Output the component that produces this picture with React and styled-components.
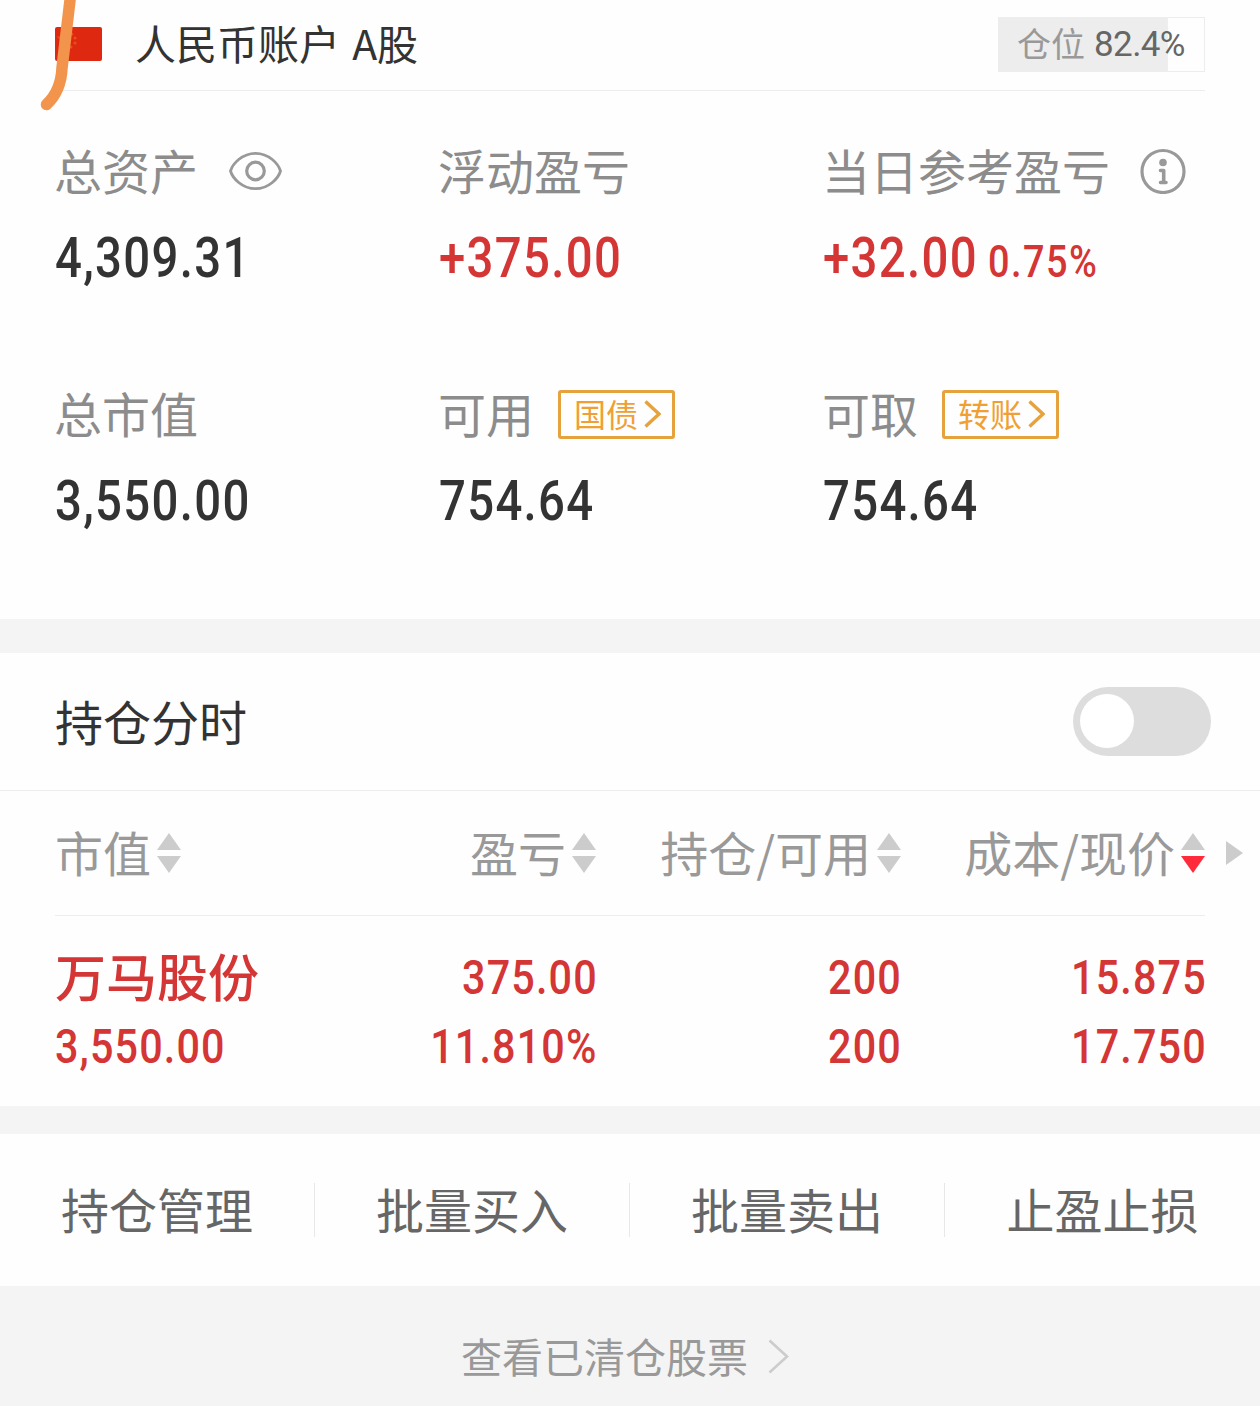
import styled, { createGlobalStyle } from "styled-components";

const GlobalStyle = createGlobalStyle`
  * {
    box-sizing: border-box;
  }
  body {
    margin: 0;
    background: #fefefe;
    color: #333;
    font-family: "Noto Sans CJK SC", sans-serif;
  }
`;

const Page = styled.main`
  width: 1260px;
  height: 1406px;
  overflow: hidden;
  position: relative;
  display: flex;
  flex-direction: column;
`;

const Header = styled.header`
  height: 91px;
  flex: none;
  margin: 0 55px;
  padding-bottom: 2px;
  border-bottom: 1px solid #ededed;
  display: flex;
  align-items: center;
`;

const Account = styled.h1`
  flex: 1;
  margin: 0 0 0 33px;
  font-size: 41px;
  font-weight: 400;
  line-height: 60px;
  word-spacing: 3px;
  padding-bottom: 5px;
`;

/* loose marker line that runs over the flag */
const Marker = styled.svg`
  position: absolute;
  left: 0;
  top: 0;
`;

const Position = styled.div`
  width: 207px;
  height: 55px;
  border: 1px solid #ededed;
  background: linear-gradient(#ededed, #ededed) no-repeat 0 0 / 82.4% 100%;
  display: flex;
  align-items: center;
  padding: 0 0 2px 18px;
  font-size: 34px;
  line-height: 50px;
  color: #999;
`;

const Percent = styled.span`
  font-family: Roboto, sans-serif;
  font-size: 35px;
  letter-spacing: -0.6px;
  color: #666;
  margin: 3px 0 0 9px;
`;

const Summary = styled.section`
  height: 528px;
  flex: none;
  padding: 45px 55px 0;
  display: grid;
  grid-template-columns: repeat(3, 384px);
  grid-template-rows: 243px 243px;
`;

const Label = styled.div`
  height: 70px;
  margin-left: -1px;
  display: flex;
  align-items: center;
  font-size: 48px;
  line-height: 70px;
  color: #8c8c8c;
  white-space: nowrap;

  svg {
    flex: none;
    margin-left: ${(p) => p.$gap || 0}px;
  }
`;

const Num = styled.span`
  display: inline-block;
  font-family: Roboto, sans-serif;
  font-weight: 500;
  font-size: ${(p) => p.$size}px;
  letter-spacing: 0.028em;
  transform: scaleX(0.86);
  transform-origin: ${(p) => (p.$right ? "right" : "left")} center;
  margin-right: ${(p) => (p.$right ? "-0.028em" : 0)};
`;

const Rate = styled(Num)`
  margin-left: -15px;
  letter-spacing: 0.04em;
`;

const Value = styled.div`
  height: 70px;
  margin-top: 17px;
  line-height: 70px;
  white-space: nowrap;
  color: ${(p) => (p.$up ? "#d43535" : "#333")};
`;

const Tag = styled.button`
  width: 117px;
  height: 49px;
  margin: 0 0 0 ${(p) => p.$gap}px;
  padding: 0 0 2px 13px;
  border: 3px solid #e6a23c;
  border-radius: 3px;
  background: none;
  display: flex;
  align-items: center;
  font: 400 32px/40px "Noto Sans CJK SC", sans-serif;
  color: #f0a032;

  svg {
    margin: 2px 0 0 6px;
  }
`;

const Band = styled.div`
  height: ${(p) => p.$height}px;
  flex: none;
  background: #f4f4f4;
`;

const ToggleRow = styled.section`
  height: 138px;
  flex: none;
  padding: 0 49px 0 55px;
  border-bottom: 1px solid #ededed;
  display: flex;
  align-items: center;
  justify-content: space-between;
  font-size: 48px;
`;

const Switch = styled.button`
  width: 138px;
  height: 69px;
  padding: 0 7px;
  border: 0;
  border-radius: 35px;
  background: #ddd;

  &::before {
    content: "";
    display: block;
    width: 54px;
    height: 54px;
    margin-bottom: 1px;
    border-radius: 50%;
    background: #fff;
  }
`;

const Columns = styled.div`
  width: 1150px;
  flex: none;
  display: grid;
  grid-template-columns: 300px 241px 305px 304px;
`;

const TableHead = styled.div`
  height: 124px;
  flex: none;
  padding-left: 55px;
  display: flex;
  align-items: center;

  > svg {
    margin-left: 21px;
  }
`;

const HeadCell = styled.div`
  display: flex;
  align-items: center;
  justify-content: ${(p) => (p.$first ? "flex-start" : "flex-end")};
  font-size: 48px;
  line-height: 70px;
  color: #999;
  white-space: nowrap;

  svg {
    flex: none;
    margin-left: 6px;
  }
`;

const Text = styled.span`
  position: relative;
  top: -2px;
`;

const Holding = styled.div`
  height: 191px;
  flex: none;
  margin: 0 55px;
  padding-top: 27px;
  border-top: 1px solid #ededed;
  color: #d43535;
`;

const Cell = styled.div`
  height: 69px;
  line-height: 69px;
  white-space: nowrap;
  text-align: ${(p) => (p.$first ? "left" : "right")};
`;

const Name = styled(Text)`
  font-size: 51px;
  font-weight: 500;
`;

const Actions = styled.nav`
  height: 152px;
  flex: none;
  display: grid;
  grid-template-columns: repeat(4, 1fr);
  align-items: center;
`;

const Action = styled.a`
  height: 54px;
  display: flex;
  align-items: center;
  justify-content: center;
  font-size: 48px;
  color: #666;

  &:not(:last-child) {
    border-right: 1px solid #e8e8e8;
  }
`;

const Cleared = styled.footer`
  flex: 1;
  background: #f4f4f4;
  display: flex;
  justify-content: center;
  align-items: center;
  padding: 21px 10px 0 0;
  font-size: 41px;
  color: #999;

  svg {
    margin-left: 20px;
  }
`;

const Flag = () => (
  <svg width="47" height="34" viewBox="0 0 47 34">
    <rect width="47" height="34" rx="2" fill="#de2910" />
    <g fill="#e8501a">
      <path d="M8 5l1.6 4.6h4.8l-3.9 2.9 1.5 4.7L8 14.3l-4 2.9 1.5-4.7-3.9-2.9h4.8z" />
      <circle cx="17" cy="7" r="1.5" />
      <circle cx="20" cy="11" r="1.5" />
      <circle cx="20" cy="16" r="1.5" />
      <circle cx="16" cy="20" r="1.5" />
    </g>
  </svg>
);

const Eye = () => (
  <svg width="54" height="40" viewBox="0 0 54 40" fill="none" stroke="#999">
    <path
      d="M2.5 20C4.5 13 14 2.3 27.5 2.3S50.500 13 52.500 20C50.500 27 41 37.700 27.500 37.700S4.500 27 2.500 20z"
      strokeWidth="2.8"
      strokeLinejoin="round"
    />
    <circle cx="27.500" cy="20" r="8.800" strokeWidth="3.200" />
  </svg>
);

const Info = () => (
  <svg width="46" height="46" viewBox="0 0 46 46" fill="none" stroke="#999">
    <circle cx="23" cy="23.500" r="21" strokeWidth="3.200" />
    <circle cx="23" cy="14.500" r="3.800" fill="#999" stroke="none" />
    <path
      d="M20.500 22.500H23.700V34M20.500 34.500H26"
      strokeWidth="3.600"
      strokeLinecap="round"
      strokeLinejoin="round"
    />
  </svg>
);

const Chevron = ({ w, h, stroke, color }) => (
  <svg width={w} height={h} viewBox={`0 0 ${w} ${h}`} fill="none">
    <path
      d={`M1.5 1.5L${w - 2} ${h / 2}L1.5 ${h - 1.5}`}
      stroke={color}
      strokeWidth={stroke}
    />
  </svg>
);

const Sort = ({ down }) => (
  <svg width="24" height="40" viewBox="0 0 24 40">
    <path d="M12 0l12 17H0z" fill="#ccc" />
    <path d="M12 40L0 23h24z" fill={down ? "#ff2a3a" : "#ccc"} />
  </svg>
);

const heads = ["市值", "盈亏", "持仓/可用", "成本/现价"];
const actions = ["持仓管理", "批量买入", "批量卖出", "止盈止损"];
const rows = [
  ["万马股份", "375.00", "200", "15.875"],
  ["3,550.00", "11.810%", "200", "17.750"],
];

function App() {
  return (
    <Page>
      <GlobalStyle />
      <Header>
        <Flag />
        <Account>人民币账户 A股</Account>
        <Position>
          仓位 <Percent>82.4%</Percent>
        </Position>
      </Header>
      <Marker width="110" height="120" viewBox="0 0 110 120">
        <path
          d="M70.500 -4L62 68Q61 91 46.500 104.500"
          fill="none"
          stroke="#f3944c"
          strokeWidth="11.500"
          strokeLinecap="round"
        />
      </Marker>

      <Summary>
        <div>
          <Label $gap={30}>
            <Text>总资产</Text>
            <Eye />
          </Label>
          <Value>
            <Num $size={55}>4,309.31</Num>
          </Value>
        </div>
        <div>
          <Label>
            <Text>浮动盈亏</Text>
          </Label>
          <Value $up>
            <Num $size={55}>+375.00</Num>
          </Value>
        </div>
        <div>
          <Label $gap={30}>
            <Text>当日参考盈亏</Text>
            <Info />
          </Label>
          <Value $up>
            <Num $size={55}>+32.00</Num>
            <Rate $size={44}>0.75%</Rate>
          </Value>
        </div>
        <div>
          <Label>
            <Text>总市值</Text>
          </Label>
          <Value>
            <Num $size={55}>3,550.00</Num>
          </Value>
        </div>
        <div>
          <Label>
            <Text>可用</Text>
            <Tag $gap={24}>
              国债
              <Chevron w={17} h={28} stroke={3.4} color="#e6a23c" />
            </Tag>
          </Label>
          <Value>
            <Num $size={55}>754.64</Num>
          </Value>
        </div>
        <div>
          <Label>
            <Text>可取</Text>
            <Tag $gap={24}>
              转账
              <Chevron w={17} h={28} stroke={3.4} color="#e6a23c" />
            </Tag>
          </Label>
          <Value>
            <Num $size={55}>754.64</Num>
          </Value>
        </div>
      </Summary>

      <Band $height={34} />
      <ToggleRow>
        <Text>持仓分时</Text>
        <Switch />
      </ToggleRow>

      <TableHead>
        <Columns>
          {heads.map((h, i) => (
            <HeadCell key={h} $first={i === 0}>
              <Text>{h}</Text>
              <Sort down={i === 3} />
            </HeadCell>
          ))}
        </Columns>
        <svg width="17" height="24" viewBox="0 0 17 24">
          <path d="M0 0l17 12L0 24z" fill="#ccc" />
        </svg>
      </TableHead>
      <Holding>
        {rows.map((row, r) => (
          <Columns key={r}>
            {row.map((text, i) => (
              <Cell key={i} $first={i === 0}>
                {r === 0 && i === 0 ? (
                  <Name>{text}</Name>
                ) : (
                  <Num $size={48} $right={i > 0}>
                    {text}
                  </Num>
                )}
              </Cell>
            ))}
          </Columns>
        ))}
      </Holding>

      <Band $height={28} />
      <Actions>
        {actions.map((a) => (
          <Action key={a}>
            <Text>{a}</Text>
          </Action>
        ))}
      </Actions>
      <Cleared>
        <Text>查看已清仓股票</Text>
        <Chevron w={21} h={35} stroke={2.6} color="#ccc" />
      </Cleared>
    </Page>
  );
}

export default App;
